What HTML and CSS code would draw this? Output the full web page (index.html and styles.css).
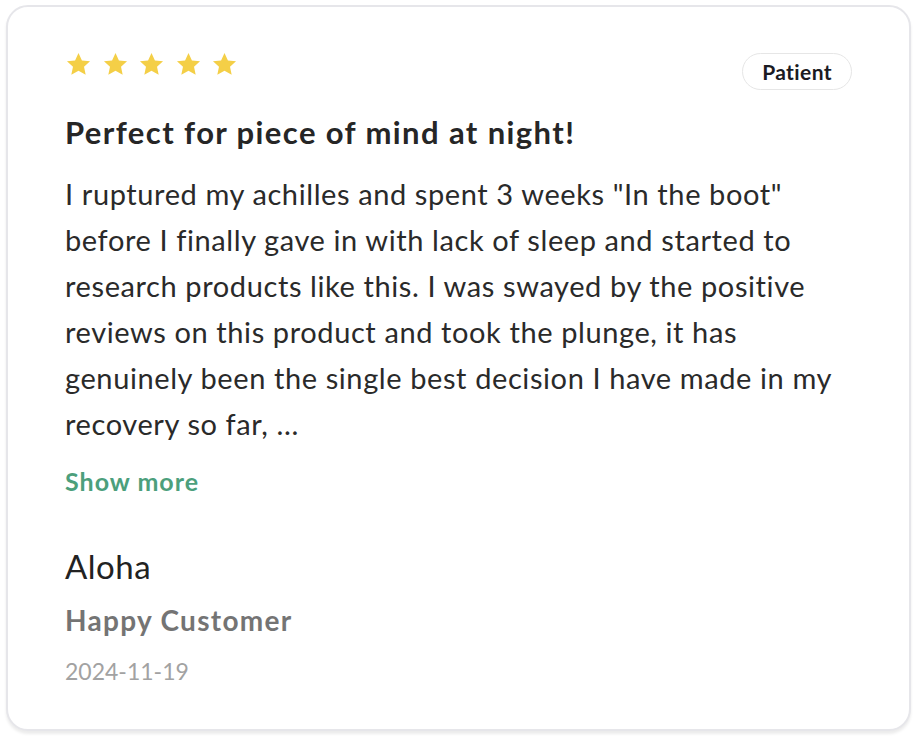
FILE: index.html
```html
<!DOCTYPE html>
<html lang="en">
<head>
<meta charset="utf-8">
<title>Review</title>
<link rel="stylesheet" href="styles.css">
</head>
<body>
<article class="card">
  <header class="card-head">
    <div class="stars" aria-label="5 out of 5 stars">
      <svg class="star" viewBox="0 0 24 24"><path d="M12 1.8l3.05 6.6 7.2.8-5.35 4.9 1.48 7.1L12 17.6l-6.38 3.6 1.48-7.1L1.75 9.2l7.2-.8z"/></svg>
      <svg class="star" viewBox="0 0 24 24"><path d="M12 1.8l3.05 6.6 7.2.8-5.35 4.9 1.48 7.1L12 17.6l-6.38 3.6 1.48-7.1L1.75 9.2l7.2-.8z"/></svg>
      <svg class="star" viewBox="0 0 24 24"><path d="M12 1.8l3.05 6.6 7.2.8-5.35 4.9 1.48 7.1L12 17.6l-6.38 3.6 1.48-7.1L1.75 9.2l7.2-.8z"/></svg>
      <svg class="star" viewBox="0 0 24 24"><path d="M12 1.8l3.05 6.6 7.2.8-5.35 4.9 1.48 7.1L12 17.6l-6.38 3.6 1.48-7.1L1.75 9.2l7.2-.8z"/></svg>
      <svg class="star" viewBox="0 0 24 24"><path d="M12 1.8l3.05 6.6 7.2.8-5.35 4.9 1.48 7.1L12 17.6l-6.38 3.6 1.48-7.1L1.75 9.2l7.2-.8z"/></svg>
    </div>
    <span class="badge">Patient</span>
  </header>
  <h2 class="title">Perfect for piece of mind at night!</h2>
  <p class="body">I ruptured my achilles and spent 3 weeks "In the boot" before I finally gave in with lack of sleep and started to research products like this. I was swayed by the positive reviews on this product and took the plunge, it has genuinely been the single best decision I have made in my recovery so far, ...</p>
  <a class="more" href="#">Show more</a>
  <footer class="author">
    <div class="name">Aloha</div>
    <div class="role">Happy Customer</div>
    <div class="date">2024-11-19</div>
  </footer>
</article>
</body>
</html>
```
FILE: styles.css
```css
* { box-sizing: border-box; }
html, body { margin: 0; padding: 0; background: #ffffff; }
body {
  font-family: Lato, "Noto Sans", sans-serif;
  color: #222222;
  padding: 5px 7px 7px 6px;
}
.card {
  height: 726px;
  background: #ffffff;
  border: 2px solid #e6e6ea;
  border-radius: 22px;
  box-shadow: 0 3px 3px rgba(0, 0, 0, 0.08);
  padding: 44px 57px 0 57px;
  display: flex;
  flex-direction: column;
}
.card-head {
  display: flex;
  justify-content: space-between;
  align-items: flex-start;
}
.stars {
  display: flex;
  gap: 9.5px;
}
.star {
  width: 27px;
  height: 27px;
  fill: #f4cf47;
}
.badge {
  margin-top: 2px;
  height: 37px;
  padding: 0 19px;
  border: 1px solid #e6e6e6;
  border-radius: 999px;
  font-size: 21px;
  font-weight: 700;
  letter-spacing: 0.4px;
  color: #1b1b22;
  display: flex;
  align-items: center;
}
.title {
  margin: 22px 0 0 0;
  font-size: 31px;
  font-weight: 700;
  letter-spacing: 1.4px;
  line-height: 40px;
  color: #262626;
}
.body {
  margin: 19px 0 0 0;
  font-size: 29px;
  letter-spacing: 0.6px;
  line-height: 46px;
  color: #2a2a2a;
}
.more {
  margin-top: 18px;
  font-size: 25px;
  font-weight: 700;
  letter-spacing: 1px;
  line-height: 32px;
  color: #4c9f7c;
  text-decoration: none;
  align-self: flex-start;
}
.author {
  margin-top: 49px;
  display: flex;
  flex-direction: column;
}
.name {
  font-size: 33px;
  letter-spacing: 0.5px;
  line-height: 40px;
  color: #222222;
}
.role {
  margin-top: 18px;
  font-size: 28px;
  font-weight: 700;
  letter-spacing: 1.3px;
  line-height: 32px;
  color: #747474;
}
.date {
  margin-top: 21px;
  font-size: 23px;
  line-height: 28px;
  color: #a2a2a2;
}
```
